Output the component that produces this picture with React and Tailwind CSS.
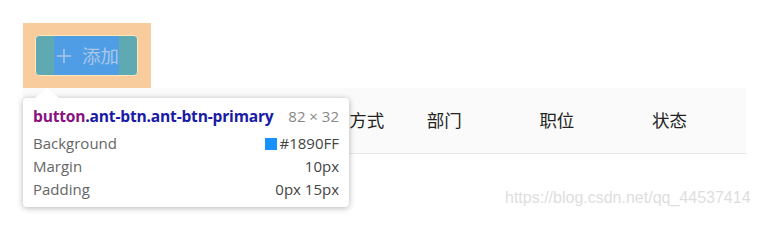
export default function App() {
    // first two headers sit under the devtools tooltip in the shot
    const cols = ['', '', '联系方式', '部门', '职位', '状态'];
    return (
        <div
            className="relative h-[215px] w-[758px] overflow-hidden bg-white"
            style={{ fontFamily: '"Noto Sans CJK SC", sans-serif' }}
        >
            <div className="px-[23px] pt-[23px]">
                {/* margin highlight */}
                <div className="w-[128px] bg-[#f9cc9d] p-[12px]">
                    <div className="flex h-[41px] w-[103px] items-stretch overflow-hidden rounded-[4px] border border-[#fde9b8] bg-[#5fa9b3] px-[18px]">
                        <div className="flex flex-1 items-center bg-[#4f9de4] pl-[3px] text-[18.5px] text-[#a9c8e9]">
                            <svg width="14" height="14" viewBox="0 0 14 14" className="shrink-0">
                                <path d="M7 0v14M0 7h14" stroke="#a9c8e9" strokeWidth="1.6" />
                            </svg>
                            <span className="ml-[11px] leading-none">添加</span>
                        </div>
                    </div>
                </div>

                {/* table header */}
                <div className="flex h-[66px] w-[723px] items-center border-b border-[#e8e8e8] bg-[#fafafa] text-[17.5px] text-[#222]">
                    {cols.map((c, i) => (
                        <div key={i} className="w-[112.6px] shrink-0 whitespace-nowrap pl-[66px]">
                            {c}
                        </div>
                    ))}
                </div>
            </div>

            {/* watermark */}
            <div
                className="absolute left-[505px] top-[186px] text-[16px] text-[#dedede]"
                style={{ fontFamily: '"Liberation Sans", Arial, sans-serif' }}
            >
                https://blog.csdn.net/qq_44537414
            </div>

            {/* devtools tooltip */}
            <div
                className="absolute left-[23px] top-[98px] w-[326px] rounded-[4px] bg-white px-[10px] pb-[6px] pt-[6px] text-[15px] shadow-[0_1px_6px_rgba(0,0,0,0.3)]"
                style={{ fontFamily: '"Open Sans", Roboto, sans-serif' }}
            >
                <div className="absolute left-[12px] top-[-10px] h-0 w-0 border-x-[12px] border-b-[10px] border-x-transparent border-b-white" />
                <div className="flex items-center justify-between leading-[24px]">
                    <span className="text-[15.6px] font-bold tracking-[-0.2px]">
                        <span className="text-[#881280]">button</span>
                        <span className="text-[#1a1aa6]">.ant-btn.ant-btn-primary</span>
                    </span>
                    <span className="text-[#888]">82 × 32</span>
                </div>
                <div className="mt-[4px] flex items-center justify-between leading-[23px] text-[#666]">
                    <span>Background</span>
                    <span className="flex items-center gap-[3px] text-[#444]">
                        <span className="inline-block h-[12px] w-[12px] bg-[#1890ff]" />
                        #1890FF
                    </span>
                </div>
                <div className="flex items-center justify-between leading-[23px] text-[#666]">
                    <span>Margin</span>
                    <span className="text-[#444]">10px</span>
                </div>
                <div className="flex items-center justify-between leading-[23px] text-[#666]">
                    <span>Padding</span>
                    <span className="text-[#444]">0px 15px</span>
                </div>
            </div>
        </div>
    );
}
